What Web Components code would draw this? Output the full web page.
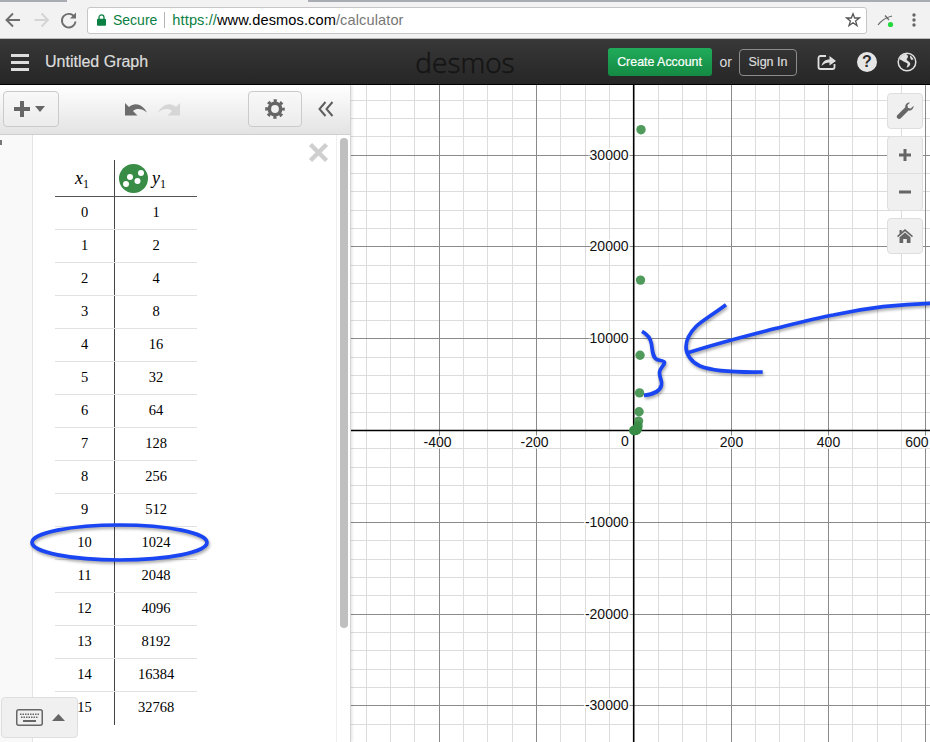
<!DOCTYPE html>
<html>
<head>
<meta charset="utf-8">
<title>Desmos</title>
<style>
  html, body { margin: 0; padding: 0; height: 100%; overflow: hidden; }
  body { font-family: "Liberation Sans", Arial, sans-serif; position: relative; width: 930px; height: 742px; background: #fff; }
  .main { display: flex; height: 657px; }
</style>
</head>
<body>
<chrome-bar></chrome-bar>
<desmos-header></desmos-header>
<div class="main">
  <exp-panel>
    <table-view></table-view>
  </exp-panel>
  <graph-paper>
    <graph-controls></graph-controls>
  </graph-paper>
</div>
<keyboard-toggle></keyboard-toggle>
<scribble-layer></scribble-layer>

<script>
class ChromeBar extends HTMLElement {
  constructor() {
    super();
    this.attachShadow({ mode: "open" });
  }

  connectedCallback() {
    this.shadowRoot.innerHTML = `
      <style>
        :host { display: block; height: 39px; background: #f2f2f2; box-sizing: border-box; border-bottom: 1px solid #b9b9b9; }
        .tabs { display: flex; height: 2px; }
        .tabs i { display: block; border-bottom: 2px solid #a9adb3; box-sizing: border-box; }
        .tabs i:nth-child(1) { width: 67px; }
        .tabs i:nth-child(2) { width: 241px; border: none; }
        .tabs i:nth-child(3) { flex: 1; }
        .row { display: flex; align-items: center; height: 36px; }
        .nav { width: 87px; flex: none; height: 36px; }
        .box {
          width: 780px; height: 27px; box-sizing: border-box; flex: none;
          background: #fff; border: 1px solid #c6c6c6; border-radius: 3px;
          display: flex; align-items: center; font-size: 14px; padding-left: 9px;
        }
        .secure { color: #0b8043; margin-left: 7px; }
        .sep { width: 1px; height: 16px; background: #b5b5b5; margin: 0 7px 0 7px; }
        .url { font-size: 14.600px; letter-spacing: 0.100px; }
        .https { color: #0b8043; }
        .host { color: #000; }
        .path { color: #777; }
        .grow { flex: 1; }
        .star { margin-right: 5px; display: block; }
        .ext { flex: none; width: 63px; height: 36px; display: block; }
      </style>
      <div class="tabs"><i></i><i></i><i></i></div>
      <div class="row">
        <svg class="nav" viewBox="0 2 87 36">
          <path d="M20 20H7M13 13.5L6.5 20L13 26.5" fill="none" stroke="#6e6e6e" stroke-width="1.9"/>
          <path d="M34.500 20H47.500M41.500 13.500L48 20L41.500 26.500" fill="none" stroke="#d4d4d4" stroke-width="1.9"/>
          <path d="M74.500 17A6.800 6.800 0 1 0 75.500 21.500" fill="none" stroke="#6e6e6e" stroke-width="1.9"/>
          <path d="M76 12.500V18.500H70Z" fill="#6e6e6e"/>
        </svg>
        <div class="box">
          <svg width="9" height="12" viewBox="0 0 9 12"><path d="M2 5V3.400a2.500 2.500 0 0 1 5 0V5" fill="none" stroke="#0b8043" stroke-width="1.300"/><rect y="4.800" width="9" height="7" rx="1" fill="#0b8043"/></svg>
          <span class="secure">Secure</span><span class="sep"></span>
          <span class="url"><span class="https">https://</span><span class="host">www.desmos.com</span><span class="path">/calculator</span></span>
          <span class="grow"></span>
          <svg class="star" width="16" height="16" viewBox="0 0 16 16"><path d="M8 1.800L9.700 6H14.400L10.600 8.900L12 13.600L8 10.800L4 13.600L5.400 8.900L1.600 6H6.300Z" fill="none" stroke="#555" stroke-width="1.300"/></svg>
        </div>
        <svg class="ext" viewBox="867 2 63 36">
          <path d="M878 25C881 21 884 18 892 16M885 15.500L889 20" fill="none" stroke="#666" stroke-width="1.200"/>
          <circle cx="890.500" cy="24.500" r="2.600" fill="#22d83a"/>
          <circle cx="914" cy="15" r="1.700" fill="#666"/><circle cx="914" cy="20" r="1.700" fill="#666"/><circle cx="914" cy="25" r="1.700" fill="#666"/>
        </svg>
      </div>
    `;
  }
}

class DesmosHeader extends HTMLElement {
  constructor() {
    super();
    this.attachShadow({ mode: "open" });
  }

  connectedCallback() {
    this.shadowRoot.innerHTML = `
      <style>
        :host {
          display: grid; grid-template-columns: 1fr auto 1fr; align-items: center;
          height: 46px; box-sizing: border-box; border-bottom: 1px solid #000;
          background: linear-gradient(#383838, #262626); color: #ddd;
        }
        .left { display: flex; align-items: center; padding-left: 11px; }
        .burger { width: 18px; display: flex; flex-direction: column; gap: 4px; margin-right: 16px; }
        .burger i { display: block; height: 3px; background: #ddd; }
        .title { font-size: 16px; -webkit-text-stroke: 0.2px #ddd; }
        .logo { font-family: "Open Sans", sans-serif; font-size: 28px; color: #151515; line-height: 46px; font-weight: 300; -webkit-text-stroke: 0.5px #151515; }
        .right { display: flex; align-items: center; justify-content: flex-end; }
        .create {
          width: 104px; height: 28px; border-radius: 3px; box-sizing: border-box;
          background: linear-gradient(#20ab5a, #148a43); color: #fff; font-size: 12.400px; -webkit-text-stroke: 0.2px #fff;
          display: flex; align-items: center; justify-content: center;
        }
        .or { font-size: 14px; margin: 0 7px 0 8px; }
        .signin {
          width: 58px; height: 27px; box-sizing: border-box; border: 1px solid #8c8c8c; border-radius: 4px;
          font-size: 12.500px; -webkit-text-stroke: 0.2px #ddd; display: flex; align-items: center; justify-content: center;
        }
        .icons { display: flex; margin-left: 20px; margin-right: 13px; gap: 20px; align-items: center; }
        .icons svg { display: block; }
        .help { width: 20px; height: 20px; border-radius: 50%; background: #e6e6e6; color: #2e2e2e; font-weight: bold; font-size: 16px; line-height: 20px; text-align: center; }
      </style>
      <div class="left">
        <div class="burger"><i></i><i></i><i></i></div>
        <span class="title">Untitled Graph</span>
      </div>
      <div class="logo">desmos</div>
      <div class="right">
        <div class="create">Create Account</div>
        <span class="or">or</span>
        <div class="signin">Sign In</div>
        <div class="icons">
          <svg width="20" height="18" viewBox="0 0 20 18">
            <path d="M9 3H3.500A2 2 0 0 0 1.500 5V14A2 2 0 0 0 3.500 16H15.500A2 2 0 0 0 17.500 14V11" fill="none" stroke="#e0e0e0" stroke-width="1.800"/>
            <path d="M4.500 13C5.500 8.500 8.500 6.500 12.500 6.500V3L19 8L12.500 12.500V9.500C9.500 9.500 7 10.500 4.500 13Z" fill="#e0e0e0"/>
          </svg>
          <div class="help">?</div>
          <svg width="20" height="20" viewBox="0 0 20 20">
            <circle cx="10" cy="10" r="8.800" fill="none" stroke="#e0e0e0" stroke-width="1.500"/>
            <path d="M6 2.500C4 4 3 5.500 2.500 7.500C4 7.800 5 8.500 6.500 9.500C8 10.500 9.500 10.500 10.500 11.500C10.800 13 10 14 9.500 15.500C10.500 16 12 14.500 13 13C14 11.500 12.500 10 11 9C9.500 8 9 7 10.500 6C11.500 5 11 3 9.500 2.200C8.500 1.800 7 2 6 2.500Z" fill="#e0e0e0"/>
            <path d="M13 3.500C14.500 4.500 16 6 16.500 7.500L14.500 8C13.500 7 12.800 5 13 3.500Z" fill="#e0e0e0"/>
          </svg>
        </div>
      </div>
    `;
  }
}

class ExpPanel extends HTMLElement {
  constructor() {
    super();
    this.attachShadow({ mode: "open" });
  }

  connectedCallback() {
    this.shadowRoot.innerHTML = `
      <style>
        :host { display: flex; flex-direction: column; width: 351px; flex: none; box-sizing: border-box; border-right: 1px solid #d4d4d4; position: relative; z-index: 1; box-shadow: 1px 0 3px rgba(0,0,0,.12); background: #fff; }
        .bar {
          height: 50px; flex: none; box-sizing: border-box; border-bottom: 1px solid #cfcfcf;
          background: linear-gradient(#ffffff, #e3e3e3);
          display: flex; align-items: center; padding: 0 0 0 3px;
        }
        .btn {
          height: 36px; box-sizing: border-box; border: 1px solid #cbcbcb; border-radius: 4px;
          display: flex; align-items: center; justify-content: center; margin-top: -2px;
          background: linear-gradient(#f8f8f8, #ececec);
        }
        .add { width: 56px; gap: 4px; padding-right: 4px; }
        .gear { width: 54px; }
        .history { display: flex; gap: 11px; margin-left: 66px; margin-right: 68px; margin-top: -1px; }
        .collapse { margin-left: 16px; display: block; margin-top: -2px; }
        svg { display: block; }
        .body { flex: 1; display: flex; min-height: 0; position: relative; }
        .gutter { width: 33px; flex: none; box-sizing: border-box; background: #f9f9f9; border-right: 1px solid #e4e4e4; }
        .tick { width: 2px; height: 5px; margin-top: 5px; background: #777; }
        .list { flex: 1; padding: 25px 0 0 22px; }
        .close { position: absolute; left: 308px; top: 7px; display: block; }
        .scroll { width: 14px; flex: none; box-sizing: border-box; border-left: 1px solid #efefef; padding: 3px 2px 0 2px; }
        .thumb { width: 8px; height: 490px; background: #bfbfbf; border-radius: 4px; margin-left: 1px; }
      </style>
      <div class="bar">
        <div class="btn add">
          <svg width="18" height="18" viewBox="0 0 18 18"><path d="M9 1V17M1 9H17" stroke="#666" stroke-width="4"/></svg>
          <svg width="10" height="6" viewBox="0 0 10 6"><path d="M0 0H10L5 6Z" fill="#666"/></svg>
        </div>
        <div class="history">
          <svg width="22" height="14" viewBox="125 104 22 14"><path d="M125 105V117.500H137.500L133 113C136.500 110 142 110.500 147 114.500C143 106.500 135 103.500 129 109Z" fill="#6c6c6c"/></svg>
          <svg width="22" height="14" viewBox="125 104 22 14" style="transform:scaleX(-1)"><path d="M125 105V117.500H137.500L133 113C136.500 110 142 110.500 147 114.500C143 106.500 135 103.500 129 109Z" fill="#d6d6d6"/></svg>
        </div>
        <div class="btn gear">
          <svg width="20" height="20" viewBox="0 0 20 20"><circle cx="10" cy="10" r="5.700" fill="none" stroke="#666" stroke-width="3.600"/><circle cx="10" cy="10" r="8.300" fill="none" stroke="#666" stroke-width="3" stroke-dasharray="3.200 3.320" stroke-dashoffset="1.600"/></svg>
        </div>
        <svg class="collapse" width="16" height="16" viewBox="0 0 16 16"><path d="M7.500 1L1.500 8L7.500 15M14.500 1L8.500 8L14.500 15" fill="none" stroke="#5f5f5f" stroke-width="2"/></svg>
      </div>
      <div class="body">
        <div class="gutter"><div class="tick"></div></div>
        <div class="list"><slot></slot></div>
        <svg class="close" width="21" height="21" viewBox="0 0 21 21"><path d="M2.500 2.500L18.500 18.500M18.500 2.500L2.500 18.500" stroke="#cfcfcf" stroke-width="4.500"/></svg>
        <div class="scroll"><div class="thumb"></div></div>
      </div>
    `;
  }
}

class TableView extends HTMLElement {
  constructor() {
    super();
    this.attachShadow({ mode: "open" });
  }

  connectedCallback() {
    // rows are just powers of two
    let rows = "";
    for (let x = 0; x <= 15; x++) {
      rows += `<div class="row"><span class="a">${x}</span><span class="b">${Math.pow(2, x)}</span></div>`;
    }
    this.shadowRoot.innerHTML = `
      <style>
        :host { display: block; width: 142px; font-family: "Liberation Serif", "Times New Roman", serif; font-size: 14.500px; color: #000; }
        .head { display: flex; height: 37px; box-sizing: border-box; border-bottom: 1px solid #555; }
        .row { display: flex; height: 33px; box-sizing: border-box; border-bottom: 1px solid #e2e2e2; line-height: 30px; text-align: center; }
        .row:last-child { border-bottom: none; }
        .a { width: 60px; box-sizing: border-box; border-right: 1px solid #444; display: block; }
        .b { flex: 1; display: block; }
        .head .a, .head .b { font-style: italic; font-size: 18px; }
        .head .a { line-height: 36px; text-align: center; padding-right: 5px; }
        .head .b { display: flex; align-items: center; padding-left: 4px; }
        sub { font-style: normal; font-size: 12px; vertical-align: -4px; line-height: 0; }
        svg { display: block; flex: none; margin-right: 4px; }
      </style>
      <div class="head">
        <span class="a">x<sub>1</sub></span>
        <span class="b">
          <svg width="29" height="29" viewBox="0 0 29 29">
            <circle cx="14.500" cy="14.500" r="14.500" fill="#388c46"/>
            <circle cx="22" cy="9" r="3" fill="#fff"/><circle cx="11" cy="13" r="3" fill="#fff"/>
            <circle cx="18.500" cy="17" r="3" fill="#fff"/><circle cx="7" cy="20" r="3" fill="#fff"/>
          </svg>
          <span>y<sub>1</sub></span>
        </span>
      </div>
      ${rows}
    `;
  }
}

class GraphPaper extends HTMLElement {
  constructor() {
    super();
    this.attachShadow({ mode: "open" });
  }

  connectedCallback() {
    const x0 = 633.7, y0 = 430.5;
    const xStep = 24.33, yStep = 18.36; // px per minor line
    const snap = (v) => Math.floor(v) + 0.5;
    let minor = "", major = "", labels = "";

    for (let i = -11; i <= 13; i++) {
      const x = snap(x0 + i * xStep);
      if (i === 0) continue;
      if (i % 4 === 0) {
        major += `<line x1="${x}" x2="${x}" y1="85" y2="742"/>`;
        const value = (i / 4) * 200;
        // the edge label gets pushed back inside the canvas
        if (value === 600) labels += `<text x="928.500" y="447" text-anchor="end">${value}</text>`;
        else labels += `<text x="${value < 0 ? x - 2 : x}" y="447" text-anchor="middle">${value}</text>`;
      } else {
        minor += `<line x1="${x}" x2="${x}" y1="85" y2="742"/>`;
      }
    }
    for (let j = -19; j <= 17; j++) {
      const y = snap(y0 + j * yStep);
      if (j === 0) continue;
      if (j % 5 === 0) {
        major += `<line x1="351" x2="930" y1="${y}" y2="${y}"/>`;
        labels += `<text x="628.500" y="${y + 4.5}" text-anchor="end">${(-j / 5) * 10000}</text>`;
      } else {
        minor += `<line x1="351" x2="930" y1="${y}" y2="${y}"/>`;
      }
    }

    let dots = "";
    for (let k = 0; k <= 15; k++) {
      const cx = x0 + k * (xStep * 4 / 200);
      const cy = y0 - Math.pow(2, k) * (yStep * 5 / 10000);
      dots += `<circle cx="${cx}" cy="${cy}" r="4.700"/>`;
    }

    this.shadowRoot.innerHTML = `
      <style>
        :host { display: block; flex: 1; position: relative; background: #fff; overflow: hidden; }
        svg { display: block; }
        .minor line { stroke: #dcdcdc; stroke-width: 1; }
        .major line { stroke: #8a8a8a; stroke-width: 1; }
        .axes line { stroke: #000; stroke-width: 1.600; }
        text { font-family: "Liberation Sans", Arial, sans-serif; font-size: 14px; fill: #111; paint-order: stroke; stroke: #fff; stroke-width: 3px; }
        .dots circle { fill: #388c46; fill-opacity: 0.88; }
      </style>
      <svg width="579" height="657" viewBox="351 85 579 657">
        <g class="minor">${minor}</g>
        <g class="major">${major}</g>
        <g class="axes">
          <line x1="${x0}" x2="${x0}" y1="85" y2="742"/>
          <line x1="351" x2="930" y1="${y0}" y2="${y0}"/>
        </g>
        <g>${labels}<text x="625" y="446" text-anchor="middle">0</text></g>
        <g class="dots">${dots}</g>
      </svg>
      <slot></slot>
    `;
  }
}

class GraphControls extends HTMLElement {
  constructor() {
    super();
    this.attachShadow({ mode: "open" });
  }

  connectedCallback() {
    this.shadowRoot.innerHTML = `
      <style>
        :host { position: absolute; top: 8px; right: 7px; width: 36px; display: flex; flex-direction: column; gap: 7px; }
        .group { background: #f0f0f0; border: 1px solid #dedede; border-radius: 4px; box-sizing: border-box; }
        .cell { height: 34px; box-sizing: border-box; display: flex; align-items: center; justify-content: center; }
        .cell.tall { height: 36px; }
        .cell + .cell { height: 37px; border-top: 1px solid #dedede; }
        svg { display: block; }
      </style>
      <div class="group"><div class="cell">
        <svg width="18" height="18" viewBox="0 0 18 18"><path d="M17.500 3.800C17.800 6.500 15.500 9 12.500 8.600L4.800 16.300C3.800 17.300 2.200 17.200 1.400 16.300C.5 15.400.5 14 1.500 13L9.300 5.300C8.800 2.500 11.300 .1 14 .5L11.400 3.200L12 5.900L14.800 6.500Z" fill="#666"/></svg>
      </div></div>
      <div class="group">
        <div class="cell tall"><svg width="14" height="14" viewBox="0 0 14 14"><path d="M7 1V13M1 7H13" stroke="#666" stroke-width="3"/></svg></div>
        <div class="cell"><svg width="14" height="4" viewBox="0 0 14 4"><path d="M1 2H13" stroke="#666" stroke-width="3"/></svg></div>
      </div>
      <div class="group"><div class="cell">
        <svg width="16" height="14" viewBox="0 0 16 14"><path d="M8 0L16 7L15 8.200L8 2.200L1 8.200L0 7L2.500 4.800V1H4.800V2.800Z" fill="#666"/><path d="M8 3.500L13.500 8.200V14H9.800V10H6.200V14H2.500V8.200Z" fill="#666"/></svg>
      </div></div>
    `;
  }
}

class KeyboardToggle extends HTMLElement {
  constructor() {
    super();
    this.attachShadow({ mode: "open" });
  }

  connectedCallback() {
    let keys = "";
    for (let i = 0; i < 8; i++) keys += `<rect x="${4 + i * 2.5}" y="4.500" width="1.500" height="1.500"/>`;
    for (let i = 0; i < 7; i++) keys += `<rect x="${5 + i * 2.5}" y="7.500" width="1.500" height="1.500"/>`;
    this.shadowRoot.innerHTML = `
      <style>
        :host {
          position: absolute; left: 1px; top: 697px; width: 77px; height: 41px; box-sizing: border-box;
          background: #f0f0f0; border: 1px solid #dedede; border-radius: 4px; z-index: 2;
          display: flex; align-items: center; padding-left: 14px; gap: 9px;
        }
        svg { display: block; }
      </style>
      <svg width="27" height="17" viewBox="0 0 27 17" fill="#666">
        <rect x=".75" y=".75" width="25.500" height="15.500" rx="2" fill="none" stroke="#666" stroke-width="1.500"/>
        ${keys}
        <rect x="7" y="11" width="13" height="2"/>
      </svg>
      <svg width="13" height="8" viewBox="0 0 13 8"><path d="M6.500 0L13 7H0Z" fill="#666"/></svg>
    `;
  }
}

class ScribbleLayer extends HTMLElement {
  constructor() {
    super();
    this.attachShadow({ mode: "open" });
  }

  connectedCallback() {
    this.shadowRoot.innerHTML = `
      <style>
        :host { position: absolute; left: 0; top: 0; width: 930px; height: 742px; z-index: 3; pointer-events: none; }
        svg { display: block; overflow: hidden; }
        g { fill: none; stroke: #1a45f2; stroke-width: 3.700; stroke-linecap: butt; stroke-linejoin: round; filter: drop-shadow(1px 2px 1.500px rgba(0,0,0,.35)); }
      </style>
      <svg width="930" height="742" viewBox="0 0 930 742">
        <g>
          <ellipse cx="119.500" cy="542.500" rx="87.500" ry="17.500"/>
          <path d="M642 331.300C648 334.500 650.500 338 651.500 344C652.500 351 652.500 357.500 657 359.500C660 360.800 664.500 360.500 664.500 362.500C664.500 365.500 659.500 368 659.500 373C659.500 378 662.500 381 661.500 385C660 392 652 394.500 644 395.300"/>
          <path d="M726 304.700C712 315 703 320 696.500 326C690 332.500 686 340 686 347C686 354 691 362 700 366C712 371 735 372.500 762.700 372"/>
          <path d="M686 353.300C712 345 740 337.500 766.700 330.700C790 325 812 319 833.300 315C852 311 868 308.500 883 306.700C898 305 915 303.700 930 303.300"/>
        </g>
      </svg>
    `;
  }
}

customElements.define("chrome-bar", ChromeBar);
customElements.define("desmos-header", DesmosHeader);
customElements.define("exp-panel", ExpPanel);
customElements.define("table-view", TableView);
customElements.define("graph-paper", GraphPaper);
customElements.define("graph-controls", GraphControls);
customElements.define("keyboard-toggle", KeyboardToggle);
customElements.define("scribble-layer", ScribbleLayer);
</script>
</body>
</html>
